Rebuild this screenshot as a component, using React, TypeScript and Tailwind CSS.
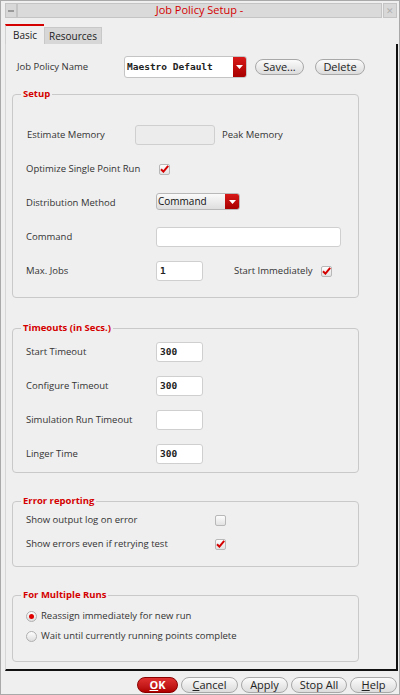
import React from "react";

const Check = ({ checked }: { checked?: boolean }) => (
  <span className="flex h-[11px] w-[11px] items-center justify-center rounded-[2px] border border-[#b8b8b8] bg-linear-to-b from-[#fdfdfd] to-[#e2e2e2]">
    {checked && (
      <svg width="9" height="8" viewBox="0 0 9 8">
        <path d="M1 4.2 L3.4 6.6 L8.2 0.8" stroke="#d40000" strokeWidth="2" fill="none" />
      </svg>
    )}
  </span>
);

const Radio = ({ on }: { on?: boolean }) => (
  <span className="flex h-[11px] w-[11px] items-center justify-center rounded-full border border-[#b0b0b0] bg-linear-to-b from-[#fdfdfd] to-[#dedede]">
    {on && <span className="h-[5px] w-[5px] rounded-full bg-[#e00000]" />}
  </span>
);

const Field = ({ value, w = "w-[47px]", disabled }: { value?: string; w?: string; disabled?: boolean }) => (
  <div
    className={`${w} h-[20px] rounded-[3px] border border-[#cfcfcf] ${disabled ? "bg-[#ececec]" : "bg-white"} flex items-center pl-[3px] font-['DejaVu_Sans_Mono',monospace] text-[9.5px] font-bold text-[#222]`}
  >
    {value}
  </div>
);

const Arrow = () => (
  <svg width="7" height="4" viewBox="0 0 7 4">
    <path d="M0 0 H7 L3.5 4 Z" fill="#fff" />
  </svg>
);

const Btn = ({ children, w, primary }: { children: React.ReactNode; w: string; primary?: boolean }) => (
  <div
    className={`${w} flex h-[16px] items-center justify-center rounded-full border text-[11px] ${
      primary
        ? "border-[#8a0000] bg-linear-to-b from-[#e03030] to-[#b00000] font-bold text-white"
        : "border-[#a8a8a8] bg-linear-to-b from-[#fbfbfb] to-[#dcdcdc] text-[#222]"
    }`}
  >
    {children}
  </div>
);

const Group = ({ title, className, children }: { title: string; className: string; children: React.ReactNode }) => (
  <fieldset className={`mx-[6px] w-[347px] rounded-[4px] border border-[#c9c9c9] ${className}`}>
    <legend className="ml-[8px] px-[2px] text-[9.5px] leading-[14px] font-bold text-[#d40000]">{title}</legend>
    {children}
  </fieldset>
);

const Row = ({ label, children }: { label: string; children?: React.ReactNode }) => (
  <div className="flex h-[34px] items-center pl-[13px]">
    <span className="w-[130px]">{label}</span>
    {children}
  </div>
);

export default function App() {
  return (
    <div className="flex h-[695px] w-[400px] flex-col border border-[#a9a9a9] bg-[#efefef] font-['Open_Sans',sans-serif] text-[9.5px] text-[#333]">
      {/* title bar */}
      <div className="mt-[2px] flex h-[15px] items-stretch pl-[4px] pr-[2px]">
        <div className="flex w-[12px] items-center justify-center border border-[#c4c4c4] bg-[#d8d8d8]">
          <span className="h-[2px] w-[6px] bg-[#9a9a9a]" />
        </div>
        <div className="flex flex-1 items-center justify-center border border-[#c4c4c4] bg-[#dadada] text-[11px] text-[#d40000]">
          Job Policy Setup -
        </div>
        <div className="ml-[1px] flex w-[14px] items-center justify-center border border-[#c4c4c4] bg-[#d8d8d8] text-[9px] text-[#b0b0b0]">
          ✕
        </div>
      </div>

      {/* tabs */}
      <div className="mt-[6px] flex h-[20px] items-end pl-[4px]">
        <div className="flex h-[20px] w-[39px] items-center justify-center border-t-2 border-l border-[#d40000] border-l-[#d0d0d0] bg-[#efefef] text-[10px] text-[#222]">
          Basic
        </div>
        <div className="flex h-[17px] w-[58px] items-center justify-center border border-b-0 border-[#c8c8c8] bg-[#d7d7d7] text-[10px] text-[#222]">
          Resources
        </div>
      </div>

      {/* panel */}
      <div className="ml-[4px] mr-[1px] flex h-[627px] flex-col border-l border-r-2 border-b-2 border-l-[#d6d6d6] border-r-[#111] border-b-[#111]">
        <div className="mt-[12px] flex h-[22px] items-center">
          <span className="w-[118px] pl-[11px]">Job Policy Name</span>
          <div className="flex h-[22px] w-[123px] items-stretch rounded-[3px] border border-[#c4c4c4] bg-white">
            <span className="flex flex-1 items-center pl-[2px] font-['DejaVu_Sans_Mono',monospace] text-[9.5px] font-bold text-[#222]">
              Maestro Default
            </span>
            <span className="flex w-[13px] items-center justify-center rounded-r-[2px] bg-linear-to-b from-[#d81818] to-[#a80000]">
              <Arrow />
            </span>
          </div>
          <div className="ml-[8px]">
            <Btn w="w-[49px]">Save...</Btn>
          </div>
          <div className="ml-[11px]">
            <Btn w="w-[50px]">Delete</Btn>
          </div>
        </div>

        <Group title="Setup" className="mt-[9px] pt-[17px] pb-[9px]">
          <div className="flex h-[34px] items-center pl-[14px]">
            <span className="w-[108px]">Estimate Memory</span>
            <Field w="w-[80px]" disabled />
            <span className="ml-[7px]">Peak Memory</span>
          </div>
          <Row label="Optimize Single Point Run">
            <span className="ml-[3px]">
              <Check checked />
            </span>
          </Row>
          <Row label="Distribution Method">
            <div className="-mt-[3px] flex h-[17px] w-[84px] items-stretch rounded-[3px] border border-[#b8b8b8] bg-linear-to-b from-[#fafafa] to-[#dedede]">
              <span className="flex flex-1 items-center pl-[1px] text-[10px] text-[#111]">Command</span>
              <span className="flex w-[14px] items-center justify-center rounded-r-[2px] bg-linear-to-b from-[#d81818] to-[#a80000]">
                <Arrow />
              </span>
            </div>
          </Row>
          <Row label="Command">
            <Field w="w-[185px]" />
          </Row>
          <Row label="Max. Jobs">
            <Field value="1" />
            <span className="ml-[31px]">Start Immediately</span>
            <span className="ml-[8px]">
              <Check checked />
            </span>
          </Row>
        </Group>

        <Group title="Timeouts (in Secs.)" className="mt-[23px] pb-[1px]">
          <Row label="Start Timeout">
            <Field value="300" />
          </Row>
          <Row label="Configure Timeout">
            <Field value="300" />
          </Row>
          <Row label="Simulation Run Timeout">
            <Field />
          </Row>
          <Row label="Linger Time">
            <Field value="300" />
          </Row>
        </Group>

        <Group title="Error reporting" className="mt-[21px] pb-[10px]">
          <div className="flex h-[24px] items-center pl-[13px]">
            <span className="w-[189px]">Show output log on error</span>
            <Check />
          </div>
          <div className="flex h-[24px] items-center pl-[13px]">
            <span className="w-[189px]">Show errors even if retrying test</span>
            <Check checked />
          </div>
        </Group>

        <Group title="For Multiple Runs" className="mt-[21px] pt-[4px] pb-[15px]">
          <div className="flex h-[20px] items-center gap-[4px] pl-[13px]">
            <Radio on />
            <span>Reassign immediately for new run</span>
          </div>
          <div className="flex h-[20px] items-center gap-[4px] pl-[13px]">
            <Radio />
            <span>Wait until currently running points complete</span>
          </div>
        </Group>
      </div>

      {/* footer */}
      <div className="mt-[6px] flex justify-end gap-[3px] pr-[2px]">
        <Btn w="w-[41px]" primary>
          <span className="underline">O</span>K
        </Btn>
        <Btn w="w-[57px]">
          <span className="underline">C</span>ancel
        </Btn>
        <Btn w="w-[47px]">Apply</Btn>
        <Btn w="w-[56px]">Stop All</Btn>
        <Btn w="w-[47px]">
          <span className="underline">H</span>elp
        </Btn>
      </div>
    </div>
  );
}
